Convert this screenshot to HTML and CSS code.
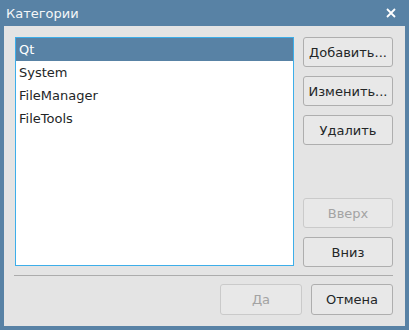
FILE: index.html
```html
<!DOCTYPE html>
<html lang="ru">
<head>
<meta charset="UTF-8" />
<meta name="viewport" content="width=device-width, initial-scale=1" />
<title>Категории</title>
<link rel="stylesheet" href="styles.css">
</head>
<body>

<div class="window">
  <div class="titlebar">
    <span class="title">Категории</span>
    <svg class="close" width="10" height="10" viewBox="0 0 10 10">
      <path d="M1 1 L9 9 M9 1 L1 9" stroke="#ffffff" stroke-width="1.8" fill="none" />
    </svg>
  </div>

  <div class="content">
    <div class="main">
      <ul class="list">
        <li class="selected">Qt</li>
        <li>System</li>
        <li>FileManager</li>
        <li>FileTools</li>
      </ul>
      <div class="side">
        <button>Добавить...</button>
        <button>Изменить...</button>
        <button>Удалить</button>
        <div class="spacer"></div>
        <button disabled>Вверх</button>
        <button>Вниз</button>
      </div>
    </div>

    <div class="separator"></div>

    <div class="footer">
      <button class="wide" disabled>Да</button>
      <button class="wide">Отмена</button>
    </div>
  </div>
</div>

</body>
</html>
```

FILE: styles.css
```css
* {
  box-sizing: border-box;
}
body {
  margin: 0;
  font-family: "DejaVu Sans", sans-serif;
  font-size: 13px;
  color: #232627;
}
.window {
  width: 409px;
  height: 330px;
  background: #5882a5;
  padding: 0 4px 4px 4px;
  display: flex;
  flex-direction: column;
}
.titlebar {
  height: 26px;
  display: flex;
  align-items: center;
  justify-content: space-between;
  padding: 0 9px 0 2px;
  color: #f4f6f8;
}
.title {
  font-size: 13px;
}
.content {
  flex: 1;
  background: #e4e4e4;
  padding: 11px 12px 11px 11px;
  display: flex;
  flex-direction: column;
}
.main {
  display: flex;
  gap: 9px;
  flex: 1;
}
.list {
  flex: 1;
  list-style: none;
  margin: 0;
  padding: 0;
  background: #ffffff;
  border: 1px solid #3daee9;
  height: 229px;
}
.list li {
  height: 23px;
  line-height: 23px;
  padding-left: 3px;
}
.list li.selected {
  background: #5882a5;
  color: #ffffff;
}
.side {
  width: 90px;
  display: flex;
  flex-direction: column;
  gap: 9px;
}
.spacer {
  flex: 1;
}
button {
  font-family: "DejaVu Sans", sans-serif;
  font-size: 13px;
  color: #232627;
  background: #e8e8e8;
  border: 1px solid #aeaeae;
  border-radius: 3px;
  height: 30px;
  padding: 0;
}
button:disabled {
  color: #a3a3a3;
  border-color: #cacaca;
}
.separator {
  height: 1px;
  background: #acacac;
  margin: 8px 0 8px -1px;
}
.footer {
  display: flex;
  justify-content: flex-end;
  gap: 9px;
}
.wide {
  width: 82px;
  height: 31px;
}
```
